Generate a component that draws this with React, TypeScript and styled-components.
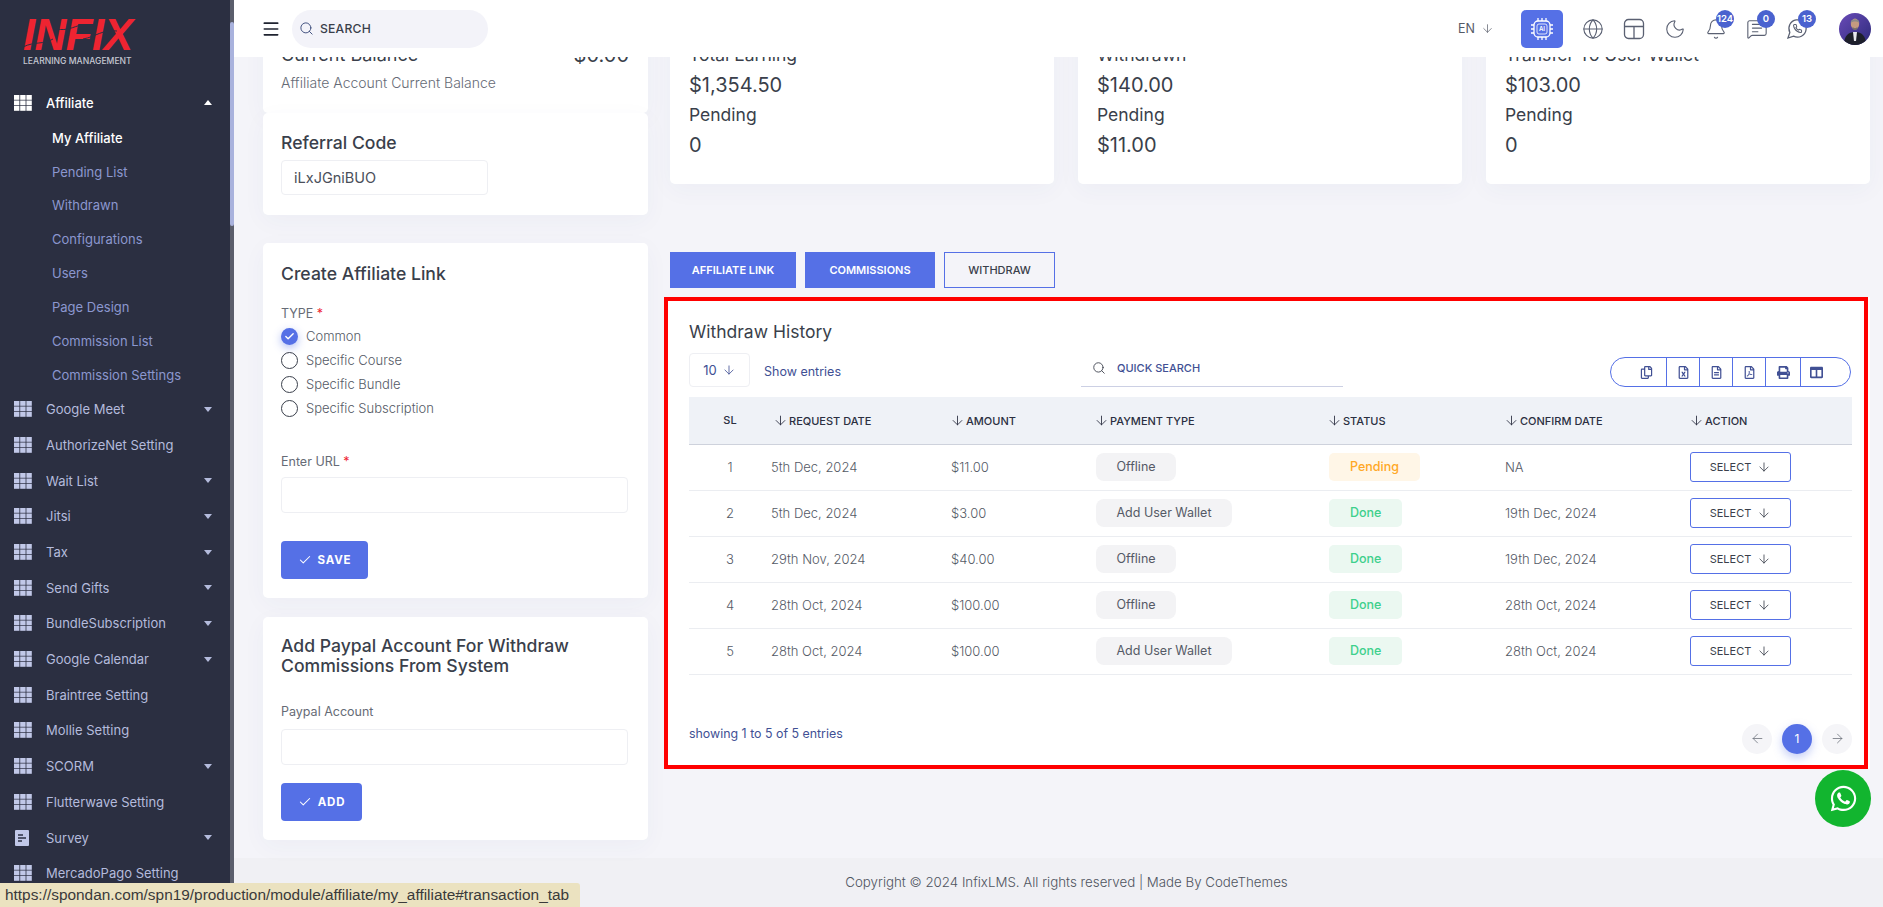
import React from "react";
import styled, { createGlobalStyle } from "styled-components";
import {
  ArrowDown,
  ArrowLeft,
  ArrowRight,
  Bell,
  Check,
  Globe,
  Menu,
  MessageSquareText,
  Moon,
  Search,
} from "lucide-react";
import {
  FaColumns,
  FaPrint,
  FaRegCopy,
  FaRegFileAlt,
  FaRegFileExcel,
  FaRegFilePdf,
  FaWhatsapp,
} from "react-icons/fa";

const blue = "#5570e6";
const navy = "#415094";
const dark = "#3a3f4b";

const GlobalStyle = createGlobalStyle`
  html, body {
    margin:0;
    height:100%;
    overflow:hidden;
    background:#f4f4f9;
    font-family:Inter, "Open Sans", sans-serif;
    color:${dark};
  }
  * { box-sizing:border-box; }
`;

const Shell = styled.div`
  display:flex;
  height:100vh;
`;

/* sidebar */
const SideWrap = styled.aside`
  display:flex;
  flex-shrink:0;
  width:234px;
  height:100%;
`;
const SideNav = styled.nav`
  width:230px;
  background:#2b2f41;
  overflow:hidden;
`;
const ScrollTrack = styled.div`
  width:4px;
  background:#5b5e6c;
  padding-top:22px;
`;
const ScrollThumb = styled.div`
  height:204px;
  background:#a9b2dd;
  border-radius:2px;
`;
const LogoBox = styled.div`
  height:85px;
  padding:17px 0 0 23px;
`;
const LogoMark = styled.div`
  position:relative;
  width:108px;
  height:36px;
  font-family:"Liberation Sans", sans-serif;
  font-size:44px;
  line-height:36px;
  font-weight:700;
  font-style:italic;
  letter-spacing:-.6px;
  color:#ee2431;
  svg {
    position:absolute;
    inset:0;
  }
`;
const LogoSub = styled.div`
  font-size:8.6px;
  line-height:12px;
  margin-top:2px;
  font-weight:500;
  white-space:nowrap;
  color:#c4c7d2;
`;
const NavRow = styled.div<{ $active?: boolean }>`
  display:flex;
  align-items:center;
  height:35.7px;
  padding:0 18px 0 14px;
  font-size:13px;
  font-weight:${({ $active }) => ($active ? 500 : 400)};
  color:${({ $active }) => ($active ? "#ffffff" : "#b4bbdc")};
  white-space:nowrap;
  span.label {
    flex:1;
    margin-left:14px;
  }
`;
const Caret = styled.i<{ $up?: boolean }>`
  width:0;
  height:0;
  border-left:4px solid transparent;
  border-right:4px solid transparent;
  border-top:${({ $up }) => ($up ? "none" : "5px solid #b4bbdc")};
  border-bottom:${({ $up }) => ($up ? "5px solid #ffffff" : "none")};
`;
const SubRow = styled.div<{ $active?: boolean }>`
  height:33.85px;
  line-height:34.5px;
  padding-left:52px;
  font-size:13px;
  font-weight:${({ $active }) => ($active ? 500 : 400)};
  color:${({ $active }) => ($active ? "#ffffff" : "#8b97cf")};
`;

/* main column */
const MainCol = styled.div`
  flex:1;
  min-width:0;
  display:flex;
  flex-direction:column;
`;
const TopBar = styled.header`
  position:relative;
  z-index:2;
  flex-shrink:0;
  height:57px;
  background:#ffffff;
  display:flex;
  align-items:center;
  padding:0 12px 0 27px;
`;
const SearchPill = styled.div`
  display:flex;
  align-items:center;
  gap:6px;
  width:196px;
  height:38px;
  margin-left:11px;
  padding-left:7px;
  border-radius:19px;
  background:#f3f3f9;
  font-size:12.2px;
  font-weight:500;
  letter-spacing:.2px;
  color:${dark};
`;
const TopRight = styled.div`
  margin-left:auto;
  display:flex;
  align-items:center;
`;
const LangBox = styled.div`
  display:flex;
  align-items:center;
  gap:6px;
  margin-right:27px;
  font-size:12.5px;
  color:#555a66;
`;
const AiButton = styled.div`
  width:42px;
  height:38px;
  border-radius:5px;
  background:${blue};
  display:flex;
  align-items:center;
  justify-content:center;
  margin-right:9px;
`;
const TopIcon = styled.div`
  position:relative;
  width:41px;
  height:38px;
  display:flex;
  align-items:center;
  justify-content:center;
  color:#5a6072;
`;
const CountBadge = styled.span`
  position:absolute;
  top:0;
  left:21px;
  min-width:18px;
  height:18px;
  border-radius:9px;
  background:#4a62cf;
  color:#ffffff;
  font-size:9.5px;
  font-weight:600;
  line-height:18px;
  text-align:center;
`;
const AvatarBox = styled.div`
  width:32px;
  height:32px;
  margin-left:21px;
`;

const Scroller = styled.div`
  flex:1;
  min-height:0;
  overflow:hidden;
`;
const ScrollInner = styled.div`
  margin-top:-30px;
`;
const ContentGrid = styled.div`
  display:grid;
  grid-template-columns:385px 1200px;
  column-gap:22px;
  padding-left:29px;
`;
const LeftCol = styled.div`
  display:flex;
  flex-direction:column;
`;
const RightCol = styled.div`
  display:flex;
  flex-direction:column;
`;
const Card = styled.section<{ $top: number }>`
  background:#ffffff;
  border-radius:5px;
  margin-top:${({ $top }) => $top}px;
  padding:0 19px 0 18px;
  box-shadow:0 6px 24px rgba(60,70,120,.04);
`;
const BalanceCard = styled(Card)`
  height:86px;
  padding-top:16px;
`;
const BalanceHead = styled.div`
  display:flex;
  justify-content:space-between;
  font-size:18px;
  line-height:24px;
  color:${dark};
  b { font-weight:400; font-size:20px; }
`;
const BalanceNote = styled.div`
  margin-top:6px;
  font-size:14px;
  line-height:20px;
  font-weight:300;
  color:#666b76;
`;
const ReferralCard = styled(Card)`
  height:102px;
  padding-top:17px;
`;
const CardTitle = styled.h3<{ $tight?: boolean }>`
  margin:0;
  font-size:17.6px;
  line-height:${({ $tight }) => ($tight ? 20 : 26)}px;
  font-weight:500;
  color:${dark};
`;
const CodeBox = styled.div`
  width:207px;
  height:35px;
  margin-top:4px;
  padding-left:12px;
  border:1px solid #eeeff3;
  border-radius:4px;
  font-size:14.5px;
  line-height:33px;
  color:#4a4f5a;
`;
const CreateCard = styled(Card)`
  height:355px;
  padding-top:18px;
`;
const FieldLabel = styled.label<{ $top?: number }>`
  display:block;
  margin-top:${({ $top }) => $top ?? 0}px;
  font-size:12.5px;
  line-height:18px;
  color:#666b76;
  em {
    color:#ee2431;
    font-style:normal;
  }
`;
const RadioGroup = styled.div`
  margin-top:1px;
`;
const RadioRow = styled.div`
  display:flex;
  align-items:center;
  gap:8px;
  height:24px;
  font-size:13px;
  font-weight:300;
  color:#555a66;
`;
const RadioDot = styled.span<{ $on?: boolean }>`
  width:17px;
  height:17px;
  border-radius:50%;
  display:flex;
  align-items:center;
  justify-content:center;
  color:#ffffff;
  border:${({ $on }) => ($on ? "none" : "1px solid #3a3f4b")};
  background:${({ $on }) => ($on ? blue : "transparent")};
  box-shadow:${({ $on }) => ($on ? "0 3px 8px rgba(85,112,230,.45)" : "none")};
`;
const TextBox = styled.div<{ $top: number }>`
  width:347px;
  height:36px;
  margin-top:${({ $top }) => $top}px;
  border:1px solid #eeeff3;
  border-radius:4px;
`;
const SolidButton = styled.button<{ $w: number; $top: number }>`
  display:flex;
  align-items:center;
  justify-content:center;
  gap:6px;
  width:${({ $w }) => $w}px;
  height:38px;
  margin-top:${({ $top }) => $top}px;
  border:none;
  border-radius:4px;
  background:${blue};
  color:#ffffff;
  font-family:inherit;
  font-size:11.5px;
  font-weight:700;
  letter-spacing:.8px;
`;
const PaypalCard = styled(Card)`
  height:223px;
  padding-top:19px;
`;
const StatGrid = styled.div`
  display:grid;
  grid-template-columns:repeat(3, 384px);
  column-gap:24px;
`;
const StatCard = styled.section`
  height:157px;
  padding:13px 19px 0;
  background:#ffffff;
  border-radius:5px;
  box-shadow:0 6px 24px rgba(60,70,120,.04);
`;
const StatLine = styled.div<{ $big?: boolean }>`
  height:30px;
  line-height:30px;
  white-space:nowrap;
  font-size:${({ $big }) => ($big ? 20 : 17.5)}px;
  font-weight:400;
  color:${dark};
`;
const TabRow = styled.div`
  display:flex;
  gap:9px;
  margin-top:68px;
`;
const TabButton = styled.div<{ $w: number; $active?: boolean }>`
  width:${({ $w }) => $w}px;
  height:36px;
  line-height:34px;
  text-align:center;
  font-size:11px;
  font-weight:${({ $active }) => ($active ? 500 : 600)};
  border:1px solid ${blue};
  background:${({ $active }) => ($active ? "transparent" : blue)};
  color:${({ $active }) => ($active ? dark : "#ffffff")};
`;
const HistoryCard = styled.section`
  width:1204px;
  height:472px;
  margin:9px 0 0 -6px;
  padding:19px 12px 0 21px;
  background:#ffffff;
  border:4px solid #ff0000;
  box-shadow:2px 0 0 #ffffff;
`;
const HistoryTitle = styled.h3`
  margin:0;
  font-size:17.5px;
  line-height:24px;
  font-weight:400;
  color:${dark};
`;
const Toolbar = styled.div`
  display:grid;
  grid-template-columns:392px 262px 1fr;
  align-items:end;
  height:34px;
  margin-top:9px;
`;
const LengthWrap = styled.div`
  display:flex;
  align-items:center;
  gap:14px;
  font-size:12.5px;
  color:${navy};
`;
const ShowLabel = styled.span`
  margin-top:2px;
`;
const LengthBox = styled.div`
  display:flex;
  align-items:center;
  justify-content:center;
  gap:5px;
  width:61px;
  height:34px;
  font-size:13px;
  border:1px solid #eeeff3;
  border-radius:4px;
`;
const QuickSearch = styled.div`
  display:flex;
  align-items:center;
  gap:11px;
  height:34px;
  padding:0 0 4px 11px;
  border-bottom:1px solid #ccd0e4;
  font-size:11px;
  font-weight:500;
  color:${navy};
`;
const ExportGroup = styled.div`
  justify-self:end;
  display:flex;
  height:30px;
  width:241px;
  margin-right:1px;
  border:1px solid ${blue};
  border-radius:15px;
  overflow:hidden;
`;
const ExportCell = styled.div<{ $w: number; $pl?: number; $pr?: number }>`
  width:${({ $w }) => $w}px;
  padding-left:${({ $pl }) => $pl ?? 0}px;
  padding-right:${({ $pr }) => $pr ?? 0}px;
  display:flex;
  align-items:center;
  justify-content:center;
  color:${navy};
  font-size:13px;
  & + & {
    border-left:1px solid ${blue};
  }
`;
const DataTable = styled.table`
  width:1163px;
  margin-top:10px;
  border-collapse:collapse;
  table-layout:fixed;
`;
const HeadCell = styled.th<{ $center?: boolean; $pl?: number }>`
  height:47px;
  padding:0 0 0 ${({ $pl }) => $pl ?? 0}px;
  background:#eff2f7;
  border-bottom:1px solid #ced2dc;
  font-size:11px;
  font-weight:500;
  text-align:${({ $center }) => ($center ? "center" : "left")};
  color:#2b2f41;
  white-space:nowrap;
  svg {
    vertical-align:-3px;
    margin-right:1px;
    margin-left:-1px;
  }
`;
const BodyCell = styled.td<{ $center?: boolean }>`
  height:46px;
  padding:0;
  border-bottom:1px solid #ebedf1;
  font-size:13px;
  font-weight:300;
  color:#555a66;
  text-align:${({ $center }) => ($center ? "center" : "left")};
`;
const Pill = styled.span`
  display:inline-block;
  height:28px;
  line-height:28px;
  margin-left:1px;
  padding:0 20.5px;
  border-radius:8px;
  background:#f3f3f5;
  font-size:12.5px;
  font-weight:400;
  color:#555a66;
`;
const StatusPill = styled.span<{ $done?: boolean }>`
  display:inline-block;
  height:28px;
  line-height:28px;
  margin-left:1px;
  padding:0 21px;
  border-radius:5px;
  font-size:12.5px;
  font-weight:500;
  background:${({ $done }) => ($done ? "#ebf8f1" : "#fff6e7")};
  color:${({ $done }) => ($done ? "#3ed08c" : "#ffa826")};
`;
const SelectButton = styled.div`
  display:flex;
  align-items:center;
  justify-content:center;
  gap:6px;
  width:101px;
  height:30px;
  border:1px solid ${blue};
  border-radius:3px;
  font-size:11px;
  font-weight:400;
  color:#3a3f4b;
`;
const TableFoot = styled.div`
  display:flex;
  align-items:center;
  justify-content:space-between;
  margin-top:49px;
`;
const EntriesNote = styled.span`
  margin-bottom:10px;
  font-size:12.4px;
  color:${navy};
`;
const Pager = styled.div`
  display:flex;
  gap:10px;
`;
const PageDot = styled.div<{ $on?: boolean }>`
  width:30px;
  height:30px;
  border-radius:50%;
  display:flex;
  align-items:center;
  justify-content:center;
  font-size:12px;
  background:${({ $on }) => ($on ? blue : "#f5f5f8")};
  color:${({ $on }) => ($on ? "#ffffff" : "#666b76")};
  box-shadow:${({ $on }) => ($on ? "0 4px 10px rgba(85,112,230,.35)" : "none")};
`;
const PageFooter = styled.footer`
  height:49px;
  margin-top:18px;
  padding-left:16px;
  background:#f0f0f4;
  line-height:49px;
  text-align:center;
  font-size:13.3px;
  font-weight:300;
  color:#4f5460;
`;
const WhatsappFab = styled.div`
  position:fixed;
  left:1815px;
  top:770px;
  width:56px;
  height:57px;
  border-radius:50%;
  background:#12b52f;
  display:flex;
  align-items:center;
  justify-content:center;
  color:#ffffff;
  font-size:29px;
`;
const LinkStatus = styled.div`
  position:fixed;
  left:0;
  bottom:0;
  z-index:3;
  width:580px;
  height:24px;
  padding-left:5px;
  background:#ebe2c0;
  border-top-right-radius:3px;
  font-family:"Liberation Sans", sans-serif;
  font-size:15.4px;
  line-height:24px;
  color:#3a3a3a;
  white-space:nowrap;
`;

const GridIcon = ({ color }: { color: string }) => (
  <svg width="18" height="16" viewBox="0 0 18 16" fill={color} style={{ flexShrink: 0 }}>
    {[0, 6.2, 12.4].map((x) =>
      [0, 5.5, 11].map((y) => <rect key={`${x}-${y}`} x={x} y={y} width="5.4" height="4.8" />)
    )}
  </svg>
);

const DocIcon = () => (
  <svg width="18" height="18" viewBox="0 0 18 18" style={{ flexShrink: 0 }}>
    <rect x="1" y="1" width="14" height="16" rx="1" fill="#c1c8e8" />
    <path d="M4 6h5M4 9h8M4 12h4" stroke="#2b2f41" strokeWidth="1.4" />
  </svg>
);

const AiChip = () => (
  <svg width="26" height="26" viewBox="0 0 26 26" fill="none" stroke="#fff" strokeWidth="1.3">
    <rect x="5" y="5" width="16" height="16" rx="4" />
    <rect x="8" y="8" width="10" height="10" rx="2" strokeWidth=".8" />
    <path d="M9 5V2M13 5V2M17 5V2M9 24v-3M13 24v-3M17 24v-3M5 9H2M5 13H2M5 17H2M24 9h-3M24 13h-3M24 17h-3" />
    <text x="13" y="15.2" fontSize="6" fontFamily="Inter, sans-serif" fontWeight="600" fill="#fff" stroke="none" textAnchor="middle">
      AI
    </text>
  </svg>
);

const LayoutGlyph = () => (
  <svg width="22" height="22" viewBox="0 0 22 22" fill="none" stroke="currentColor" strokeWidth="1.3">
    <rect x="1.5" y="1.5" width="19" height="19" rx="4" />
    <path d="M1.5 8.5h19M11 8.5v12" />
  </svg>
);

const WhatsappGlyph = () => (
  <svg width="23" height="23" viewBox="0 0 24 24" fill="none" stroke="currentColor" strokeWidth="1.3">
    <path d="M7.9 20A9 9 0 1 0 4 16.1L2 22Z" />
    <path
      transform="translate(7 7) scale(.42)"
      strokeWidth="2.6"
      d="M22 16.92v3a2 2 0 0 1-2.18 2 19.79 19.79 0 0 1-8.63-3.07 19.5 19.5 0 0 1-6-6 19.79 19.79 0 0 1-3.07-8.67A2 2 0 0 1 4.11 2h3a2 2 0 0 1 2 1.72 12.84 12.84 0 0 0 .7 2.81 2 2 0 0 1-.45 2.11L8.09 9.91a16 16 0 0 0 6 6l1.27-1.27a2 2 0 0 1 2.11-.45 12.84 12.84 0 0 0 2.81.7A2 2 0 0 1 22 16.92z"
    />
  </svg>
);

const Avatar = () => (
  <svg width="32" height="32" viewBox="0 0 32 32">
    <defs>
      <linearGradient id="avatarBg" x1="0" y1="0" x2="1" y2="1">
        <stop offset="0" stopColor="#6a4bb8" />
        <stop offset="1" stopColor="#2c2a7a" />
      </linearGradient>
      <clipPath id="avatarClip">
        <circle cx="16" cy="16" r="16" />
      </clipPath>
    </defs>
    <g clipPath="url(#avatarClip)">
      <rect width="32" height="32" fill="url(#avatarBg)" />
      <path d="M5 32c0-9 4-13 11-13s11 4 11 13z" fill="#1d1f2b" />
      <path d="M14 19h4l-1 9h-2z" fill="#e8e8ee" />
      <ellipse cx="16" cy="11" rx="4.2" ry="5.4" fill="#c49a80" />
      <path d="M11.6 10c0-5 8.8-5 8.8 0-2-2-6.800-2-8.800 0z" fill="#8d8a88" />
      <path d="M13.5 14c1.500 1.500 3.500 1.500 5 0v2c-1.500 1.300-3.500 1.300-5 0z" fill="#77706c" />
    </g>
  </svg>
);

const navItems = [
  { label: "Google Meet", caret: true },
  { label: "AuthorizeNet Setting" },
  { label: "Wait List", caret: true },
  { label: "Jitsi", caret: true },
  { label: "Tax", caret: true },
  { label: "Send Gifts", caret: true },
  { label: "BundleSubscription", caret: true },
  { label: "Google Calendar", caret: true },
  { label: "Braintree Setting" },
  { label: "Mollie Setting" },
  { label: "SCORM", caret: true },
  { label: "Flutterwave Setting" },
  { label: "Survey", caret: true, doc: true },
  { label: "MercadoPago Setting" },
];

const subItems = [
  "My Affiliate",
  "Pending List",
  "Withdrawn",
  "Configurations",
  "Users",
  "Page Design",
  "Commission List",
  "Commission Settings",
];

const stats = [
  { title: "Total Earning", value: "$1,354.50", pending: "0" },
  { title: "Withdrawn", value: "$140.00", pending: "$11.00" },
  { title: "Transfer To User Wallet", value: "$103.00", pending: "0" },
];

const rows = [
  { sl: 1, date: "5th Dec, 2024", amount: "$11.00", type: "Offline", status: "Pending", confirm: "NA" },
  { sl: 2, date: "5th Dec, 2024", amount: "$3.00", type: "Add User Wallet", status: "Done", confirm: "19th Dec, 2024" },
  { sl: 3, date: "29th Nov, 2024", amount: "$40.00", type: "Offline", status: "Done", confirm: "19th Dec, 2024" },
  { sl: 4, date: "28th Oct, 2024", amount: "$100.00", type: "Offline", status: "Done", confirm: "28th Oct, 2024" },
  { sl: 5, date: "28th Oct, 2024", amount: "$100.00", type: "Add User Wallet", status: "Done", confirm: "28th Oct, 2024" },
];

const columns = [82, 180, 144, 233, 177, 185, 162];
const headers = ["REQUEST DATE", "AMOUNT", "PAYMENT TYPE", "STATUS", "CONFIRM DATE", "ACTION"];
const radios = ["Common", "Specific Course", "Specific Bundle", "Specific Subscription"];

const Sidebar = () => (
  <SideWrap>
    <SideNav>
      <LogoBox>
        <LogoMark>
          INFIX
          <svg width="108" height="36" viewBox="0 0 108 36" fill="none" stroke="#2b2f41" strokeWidth="1">
            <path d="M0 30c12-6 20-2 30-8M34 12c10 2 16-2 24-4M60 22c12-2 20-10 34-8" />
          </svg>
        </LogoMark>
        <LogoSub>LEARNING MANAGEMENT</LogoSub>
      </LogoBox>
      <NavRow $active>
        <GridIcon color="#ffffff" />
        <span className="label">Affiliate</span>
        <Caret $up />
      </NavRow>
      {subItems.map((item, i) => (
        <SubRow key={item} $active={i === 0}>
          {item}
        </SubRow>
      ))}
      {navItems.map((item) => (
        <NavRow key={item.label}>
          {item.doc ? <DocIcon /> : <GridIcon color="#c1c8e8" />}
          <span className="label">{item.label}</span>
          {item.caret && <Caret />}
        </NavRow>
      ))}
    </SideNav>
    <ScrollTrack>
      <ScrollThumb />
    </ScrollTrack>
  </SideWrap>
);

const Header = () => (
  <TopBar>
    <Menu size={20} strokeWidth={2} color="#1f2330" />
    <SearchPill>
      <Search size={15} strokeWidth={1.5} color="#3a4a7a" />
      SEARCH
    </SearchPill>
    <TopRight>
      <LangBox>
        EN
        <ArrowDown size={13} strokeWidth={1.3} />
      </LangBox>
      <AiButton>
        <AiChip />
      </AiButton>
      <TopIcon>
        <Globe size={22} strokeWidth={1.2} />
      </TopIcon>
      <TopIcon>
        <LayoutGlyph />
      </TopIcon>
      <TopIcon>
        <Moon size={22} strokeWidth={1.2} />
      </TopIcon>
      <TopIcon>
        <Bell size={22} strokeWidth={1.2} />
        <CountBadge>124</CountBadge>
      </TopIcon>
      <TopIcon>
        <MessageSquareText size={22} strokeWidth={1.2} />
        <CountBadge>0</CountBadge>
      </TopIcon>
      <TopIcon>
        <WhatsappGlyph />
        <CountBadge>13</CountBadge>
      </TopIcon>
      <AvatarBox>
        <Avatar />
      </AvatarBox>
    </TopRight>
  </TopBar>
);

const LeftColumn = () => (
  <LeftCol>
    <BalanceCard $top={0}>
      <BalanceHead>
        <span>Current Balance</span>
        <b>$0.00</b>
      </BalanceHead>
      <BalanceNote>Affiliate Account Current Balance</BalanceNote>
    </BalanceCard>
    <ReferralCard $top={0}>
      <CardTitle>Referral Code</CardTitle>
      <CodeBox>iLxJGniBUO</CodeBox>
    </ReferralCard>
    <CreateCard $top={28}>
      <CardTitle>Create Affiliate Link</CardTitle>
      <FieldLabel $top={18}>
        TYPE <em>*</em>
      </FieldLabel>
      <RadioGroup>
        {radios.map((r, i) => (
          <RadioRow key={r}>
            <RadioDot $on={i === 0}>{i === 0 && <Check size={11} strokeWidth={3} />}</RadioDot>
            {r}
          </RadioRow>
        ))}
      </RadioGroup>
      <FieldLabel $top={33}>
        Enter URL <em>*</em>
      </FieldLabel>
      <TextBox $top={6} />
      <SolidButton $w={87} $top={28}>
        <Check size={14} strokeWidth={1.8} />
        SAVE
      </SolidButton>
    </CreateCard>
    <PaypalCard $top={19}>
      <CardTitle $tight>
        Add Paypal Account For Withdraw
        <br />
        Commissions From System
      </CardTitle>
      <FieldLabel $top={27}>Paypal Account</FieldLabel>
      <TextBox $top={8} />
      <SolidButton $w={81} $top={18}>
        <Check size={14} strokeWidth={1.8} />
        ADD
      </SolidButton>
    </PaypalCard>
  </LeftCol>
);

const HistoryTable = () => (
  <DataTable>
    <colgroup>
      {columns.map((w, i) => (
        <col key={i} style={{ width: w }} />
      ))}
    </colgroup>
    <thead>
      <tr>
        <HeadCell $center>SL</HeadCell>
        {headers.map((h, i) => (
          <HeadCell key={h} $pl={i === 0 ? 3 : 0}>
            <ArrowDown size={15} strokeWidth={1.4} />
            {h}
          </HeadCell>
        ))}
      </tr>
    </thead>
    <tbody>
      {rows.map((r) => (
        <tr key={r.sl}>
          <BodyCell $center>{r.sl}</BodyCell>
          <BodyCell>{r.date}</BodyCell>
          <BodyCell>{r.amount}</BodyCell>
          <BodyCell>
            <Pill>{r.type}</Pill>
          </BodyCell>
          <BodyCell>
            <StatusPill $done={r.status === "Done"}>{r.status}</StatusPill>
          </BodyCell>
          <BodyCell>{r.confirm}</BodyCell>
          <BodyCell>
            <SelectButton>
              SELECT
              <ArrowDown size={14} strokeWidth={1.4} />
            </SelectButton>
          </BodyCell>
        </tr>
      ))}
    </tbody>
  </DataTable>
);

const RightColumn = () => (
  <RightCol>
    <StatGrid>
      {stats.map((s) => (
        <StatCard key={s.title}>
          <StatLine>{s.title}</StatLine>
          <StatLine $big>{s.value}</StatLine>
          <StatLine>Pending</StatLine>
          <StatLine $big>{s.pending}</StatLine>
        </StatCard>
      ))}
    </StatGrid>
    <TabRow>
      <TabButton $w={126}>AFFILIATE LINK</TabButton>
      <TabButton $w={130}>COMMISSIONS</TabButton>
      <TabButton $w={111} $active>
        WITHDRAW
      </TabButton>
    </TabRow>
    <HistoryCard>
      <HistoryTitle>Withdraw History</HistoryTitle>
      <Toolbar>
        <LengthWrap>
          <LengthBox>
            10
            <ArrowDown size={14} strokeWidth={1.4} />
          </LengthBox>
          <ShowLabel>Show entries</ShowLabel>
        </LengthWrap>
        <QuickSearch>
          <Search size={14} strokeWidth={1.5} color="#3a3f4b" />
          QUICK SEARCH
        </QuickSearch>
        <ExportGroup>
          <ExportCell $w={55} $pl={15}>
            <FaRegCopy />
          </ExportCell>
          <ExportCell $w={33}>
            <FaRegFileExcel />
          </ExportCell>
          <ExportCell $w={33}>
            <FaRegFileAlt />
          </ExportCell>
          <ExportCell $w={33}>
            <FaRegFilePdf />
          </ExportCell>
          <ExportCell $w={35}>
            <FaPrint />
          </ExportCell>
          <ExportCell $w={50} $pr={18}>
            <FaColumns />
          </ExportCell>
        </ExportGroup>
      </Toolbar>
      <HistoryTable />
      <TableFoot>
        <EntriesNote>showing 1 to 5 of 5 entries</EntriesNote>
        <Pager>
          <PageDot>
            <ArrowLeft size={15} strokeWidth={1.2} />
          </PageDot>
          <PageDot $on>1</PageDot>
          <PageDot>
            <ArrowRight size={15} strokeWidth={1.2} />
          </PageDot>
        </Pager>
      </TableFoot>
    </HistoryCard>
  </RightCol>
);

export default function App() {
  return (
    <>
      <GlobalStyle />
      <Shell>
        <Sidebar />
        <MainCol>
          <Header />
          <Scroller>
            <ScrollInner>
              <ContentGrid>
                <LeftColumn />
                <RightColumn />
              </ContentGrid>
              <PageFooter>Copyright © 2024 InfixLMS. All rights reserved | Made By CodeThemes</PageFooter>
            </ScrollInner>
          </Scroller>
        </MainCol>
      </Shell>
      <WhatsappFab>
        <FaWhatsapp />
      </WhatsappFab>
      <LinkStatus>https://spondan.com/spn19/production/module/affiliate/my_affiliate#transaction_tab</LinkStatus>
    </>
  );
}
